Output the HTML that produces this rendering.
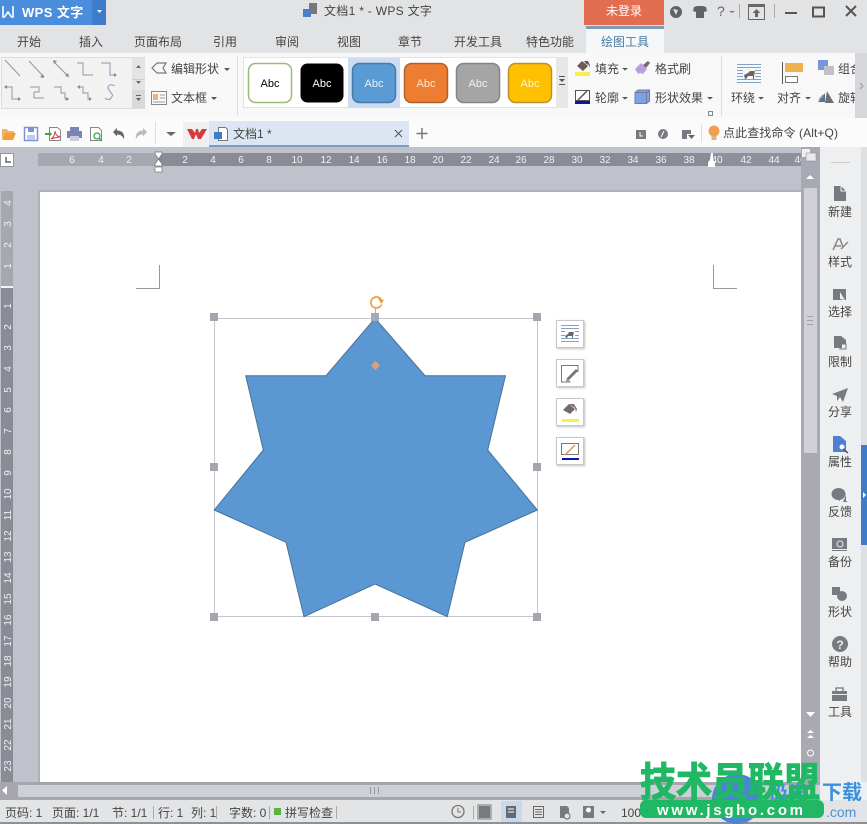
<!DOCTYPE html>
<html><head><meta charset="utf-8"><style>
html,body{margin:0;padding:0;background:#fff;width:867px;height:824px;overflow:hidden}
svg{display:block}
text{font-family:"Liberation Sans","Noto Sans CJK SC",sans-serif;font-size:12px;fill:#444}
.w{fill:#fff}
.r{font-size:10px;fill:#f2f2f4;text-anchor:middle}
.v{font-size:10px;fill:#f2f2f4;text-anchor:middle}
.s{font-size:12px;fill:#444;text-anchor:middle}
.st{font-size:12px;fill:#444}
.ln{fill:none;stroke:#8a98ad;stroke-width:1}
.ic{fill:#777a80}
</style></head><body>
<svg width="867" height="824" viewBox="0 0 867 824" xmlns="http://www.w3.org/2000/svg">
<defs>
<filter id="sh" x="-20%" y="-20%" width="150%" height="150%"><feDropShadow dx="1" dy="1" stdDeviation="1" flood-color="#000" flood-opacity=".25"/></filter>
</defs>
<!-- backgrounds -->
<rect width="867" height="824" fill="#bfc1cb"/>
<rect width="867" height="53" fill="#e2e3e5"/>
<rect y="53" width="867" height="65" fill="#f8f8f8"/>
<rect y="118" width="867" height="29" fill="#fbfbfb"/>
<!-- title bar -->
<rect width="92" height="25" fill="#4a8ddc"/>
<rect x="92" width="14" height="25" fill="#3d7cc9"/>
<path d="M3 6v11h1.500l3.500-5 3.500 5H13V6" fill="none" stroke="#fff" stroke-width="1.600"/>
<text x="22" y="17" class="w" style="font-size:13px;font-weight:bold;letter-spacing:.4px">WPS 文字</text>
<path d="M97 10h5l-2.500 3z" fill="#fff"/>
<rect x="309" y="3" width="8" height="11" fill="#777"/><rect x="303" y="9" width="8" height="8" fill="#4a7fc4"/>
<text x="324" y="15" style="letter-spacing:.3px">文档1 * - WPS 文字</text>
<rect x="584" width="80" height="25" fill="#e26d50"/>
<text x="606" y="15" class="w">未登录</text>
<circle cx="676" cy="12" r="6" fill="#5f6266"/><path d="M673 9l5 1-2 5z" fill="#e2e3e5"/>
<path d="M694 7l3-1h6l3 1 1 4-3 1v6h-8v-6l-3-1z" fill="#5f6266"/>
<text x="717" y="16" style="font-size:14px;fill:#666">?</text><path d="M729 11h6l-3 2z" fill="#777"/>
<rect x="739" y="4" width="1" height="14" fill="#aaa"/>
<rect x="748.500" y="4.500" width="16" height="15" fill="none" stroke="#666"/><rect x="748" y="4" width="17" height="3" fill="#666"/>
<path d="M756.500 9l4 4h-2.500v4h-3v-4h-2.500z" fill="#666"/>
<rect x="774" y="4" width="1" height="14" fill="#aaa"/>
<rect x="785" y="12" width="12" height="2" fill="#555"/>
<rect x="813" y="7.500" width="11" height="9" fill="none" stroke="#555" stroke-width="2"/>
<path d="M846 6l10 10M856 6l-10 10" stroke="#555" stroke-width="2"/>
<!-- tabs -->
<text x="17" y="46">开始</text><text x="79" y="46">插入</text><text x="134" y="46">页面布局</text><text x="213" y="46">引用</text><text x="275" y="46">审阅</text><text x="337" y="46">视图</text><text x="398" y="46">章节</text><text x="454" y="46">开发工具</text><text x="526" y="46">特色功能</text>
<rect x="586" y="26" width="78" height="27" fill="#f5f7f8"/><rect x="586" y="26" width="78" height="3" fill="#7f9cb8"/>
<text x="601" y="46" style="fill:#4a7ca0">绘图工具</text>
<!-- line gallery -->
<rect x="1.500" y="57.500" width="143" height="51" fill="#f4f2f1" stroke="#ddd"/>
<rect x="132" y="58" width="13" height="50" fill="#e4e4e6"/><rect x="132" y="79" width="13" height="1" fill="#ccc"/><rect x="132" y="90" width="13" height="18" fill="#d8d9dc"/>
<path d="M136 68h5l-2.500-3zM136 81h5l-2.500 3z" fill="#666"/><path d="M136 98h5l-2.500 3zM136 95h5v1h-5z" fill="#666"/>
<g class="ln">
<path d="M5 60l15 16M29 61l15 16M55 63l13 13M77 63h6v12h10M101 63h9v12h6M6 87h6v12h8M30 87h9v5h-5v6h10M54 87h7v6h4v6h4M78 87h5v6h5v6h3M115 86c-5-3-9 0-6 4 3 5 5 4 2 8-1 2-4 2-6 0"/>
</g>
<path d="M44 78l-4-1 3-3zM53 60l4 1-3 3zM69 77l-4-1 3-3zM117 75l-3-2v4zM21 99l-3-2v4zM69 99l-3-2v4zM92 99l-3-2v4zM4 87l3-2v4zM77 87l3-2v4z" fill="#7d8ba0"/>
<path d="M152 68l5-5h9l-3 5 3 5h-9z" fill="none" stroke="#777" stroke-width="1.200"/>
<text x="171" y="73">编辑形状</text><path d="M224 68h6l-3 3z" fill="#555"/>
<rect x="151.500" y="91.500" width="15" height="13" fill="#fbfbfb" stroke="#888"/><rect x="153" y="94" width="5" height="6" fill="#eeb27e"/><path d="M160 95h5M160 98h5M153 102h12" stroke="#999"/>
<text x="171" y="102">文本框</text><path d="M211 97h6l-3 3z" fill="#555"/>
<rect x="237" y="56" width="1" height="60" fill="#ddd"/>
<!-- style gallery -->
<rect x="243.500" y="57.500" width="324" height="50" fill="#fff" stroke="#e2e2e2"/>
<rect x="348" y="58" width="52" height="50" fill="#ccdcf1"/>
<rect x="556" y="58" width="12" height="50" fill="#e7e7e8"/>
<path d="M559 79h6l-3 3zM559 76h6v1h-6z" fill="#555"/><path d="M559 84h6v1h-6z" fill="#555"/>
<rect x="248.500" y="63.500" width="43" height="39" rx="7" fill="#fff" stroke="#9bbb7c" stroke-width="1.500"/>
<rect x="300.500" y="63.500" width="43" height="39" rx="7" fill="#000"/>
<rect x="352.500" y="63.500" width="43" height="39" rx="7" fill="#5b9bd5" stroke="#477ba8" stroke-width="1.500"/>
<rect x="404.500" y="63.500" width="43" height="39" rx="7" fill="#ed7d31" stroke="#b0622c" stroke-width="1.500"/>
<rect x="456.500" y="63.500" width="43" height="39" rx="7" fill="#a5a5a5" stroke="#858585" stroke-width="1.500"/>
<rect x="508.500" y="63.500" width="43" height="39" rx="7" fill="#ffc000" stroke="#b9922c" stroke-width="1.500"/>
<g text-anchor="middle">
<text x="270" y="87" style="font-size:11px;fill:#000">Abc</text><text x="322" y="87" class="w" style="font-size:11px">Abc</text><text x="374" y="87" class="w" style="font-size:11px;fill:#e8f0f8">Abc</text><text x="426" y="87" class="w" style="font-size:11px;fill:#fde8d8">Abc</text><text x="478" y="87" class="w" style="font-size:11px;fill:#f0f0f0">Abc</text><text x="530" y="87" class="w" style="font-size:11px;fill:#fff4c8">Abc</text>
</g>
<!-- fill etc -->
<rect x="575" y="72" width="15" height="4" fill="#f7f04a"/>
<path d="M577 66l5-5 6 5-5 5zM584 61h4l2 4v3l-1-3-3-1z" fill="#6f5a5a"/>
<text x="595" y="73">填充</text><path d="M622 68h6l-3 2.500z" fill="#555"/>
<path d="M635 69l6-6 6 6-4 5-3-1-2 1z" fill="#bb9fdc"/><path d="M643 65l5-4 2 2-4 5z" fill="#6a6a72"/>
<text x="655" y="73">格式刷</text>
<rect x="575.500" y="90.500" width="14" height="10" fill="#fff" stroke="#555"/><path d="M578 100l9-9" stroke="#555" stroke-width="1.500"/><rect x="575" y="101" width="15" height="3" fill="#1010b0"/>
<text x="595" y="102">轮廓</text><path d="M622 97h6l-3 2.500z" fill="#555"/>
<path d="M635 92.500l3-2.500h11.500v11l-3 2.500H635z" fill="#7ea0e4" stroke="#6c7f9e"/><path d="M635 92.500h11.500v11M646.500 92.500l3-2.500" fill="none" stroke="#6c7f9e"/>
<text x="655" y="102">形状效果</text><path d="M707 97h6l-3 2.500z" fill="#555"/>
<rect x="708.500" y="111.500" width="4" height="4" fill="none" stroke="#888"/>
<rect x="721" y="56" width="1" height="60" fill="#ddd"/>
<!-- arrange -->
<g stroke="#7ca3c8"><path d="M737 64.500h24M737 82.500h24M737 79.500h24M737 67.500h24M737 70.500h6M755 70.500h6M737 73.500h6M755 73.500h6M737 76.500h6M755 76.500h6"/></g>
<path d="M744 75l4-2 2-2h5l-1 5v3h-1v-3h-5l-2 3h-1z" fill="#666"/>
<text x="731" y="102">环绕</text><path d="M758 97h6l-3 2.500z" fill="#555"/>
<rect x="782" y="62" width="1" height="22" fill="#555"/>
<rect x="785" y="63" width="18" height="9" fill="#f0b050"/><rect x="785.500" y="76.500" width="12" height="6" fill="#fff" stroke="#777"/>
<text x="777" y="102">对齐</text><path d="M805 97h6l-3 2.500z" fill="#555"/>
<rect x="818" y="60" width="10" height="10" fill="#7b94dc"/><rect x="824" y="66" width="10" height="9" fill="#bfc1c6"/>
<text x="838" y="73">组合</text>
<path d="M818 102l7-9v9zM827 91l7 12h-9z" fill="#6a7078"/><path d="M818 100l5-6v4z" fill="#5fa6d8"/>
<text x="838" y="102">旋转</text>
<rect x="855" y="53" width="12" height="65" fill="#d6d7db"/>
<path d="M860 83l3 3-3 3" fill="none" stroke="#999"/>
<!-- toolbar -->
<path d="M2 129h5l1 2h6v2H5l-3 6z" fill="#f1b35c"/><path d="M5 133h11l-3 7H2z" fill="#f39c3e"/>
<rect x="24.500" y="127.500" width="13" height="13" fill="#fff" stroke="#7a93d6" stroke-width="1.500"/><rect x="28" y="128" width="6" height="4" fill="#7a93d6"/><rect x="27" y="135" width="8" height="5" fill="#bccbee"/>
<path d="M49.500 127.500h8l3 3v10h-11z" fill="#fff" stroke="#888"/><path d="M45 133h4v-2l3 3-3 3v-2h-4z" fill="#3aa84c"/><path d="M51 139c3-2 4-5 4-8 0 3 2 5 5 6-3 0-6 1-9 2z" fill="none" stroke="#d8363a"/>
<rect x="70" y="127" width="9" height="4" fill="#7b85b5"/><rect x="67" y="131" width="15" height="7" fill="#7b85b5"/><rect x="70" y="136" width="9" height="5" fill="#ccd"/>
<path d="M90.500 127.500h8l3 3v10h-11z" fill="#fff" stroke="#888"/><circle cx="97" cy="136" r="3" fill="none" stroke="#3aa84c" stroke-width="1.300"/><path d="M99 138l3 3" stroke="#3aa84c" stroke-width="1.300"/>
<path d="M113 132l4-4v2.500c5 0 8 3 7 9-1-3-3-5-7-5v2z" fill="#666"/>
<path d="M147 132l-4-4v2.500c-5 0-8 3-7 9 1-3 3-5 7-5v2z" fill="#bbb"/>
<rect x="155" y="122" width="1" height="22" fill="#ddd"/>
<path d="M166 132h10l-5 4z" fill="#666"/>
<rect x="183" y="122" width="26" height="25" fill="#f0f0f0"/>
<path d="M187 129h5l3 4 1-4h2l1 4 3-4h5l-6 10h-3l-2-5-2 5h-2z" fill="#d8393a"/>
<rect x="209" y="121" width="200" height="26" fill="#dce6f2"/><rect x="209" y="145" width="200" height="2" fill="#7b9cc4"/>
<path d="M218.500 127.500h7l2 2v11h-9z" fill="#fff" stroke="#777"/><rect x="214" y="132" width="8" height="7" fill="#3f7cc6"/>
<text x="233" y="138">文档1 *</text>
<path d="M395 130l7 7M402 130l-7 7" stroke="#555" stroke-width="1"/>
<path d="M422 128v11M416.500 133.500h11" stroke="#777" stroke-width="1.500"/>
<rect x="636" y="130" width="10" height="9" fill="#777a80"/><path d="M640 132v4h3" stroke="#fff" fill="none"/>
<circle cx="663" cy="134" r="5" fill="#777a80"/><path d="M661 137l3-6" stroke="#fff"/>
<path d="M682 130h9v4h-9z" fill="#777a80"/><path d="M682 134h5v5h-5z" fill="#777a80"/><path d="M688 135h7l-3.500 4z" fill="#666"/>
<rect x="701" y="124" width="1" height="18" fill="#ddd"/>
<circle cx="714" cy="131" r="5.500" fill="#f0a050"/><rect x="711.500" y="136" width="5" height="4" fill="#e0b080"/>
<text x="723" y="137" style="letter-spacing:.1px">点此查找命令 (Alt+Q)</text>
<!-- ruler -->
<rect x="38" y="153" width="120" height="13" fill="#a6a7af"/>
<rect x="158" y="153" width="554" height="13" fill="#8a8b94"/>
<rect x="712" y="153" width="89" height="13" fill="#8f9099"/>
<rect x="0.500" y="153.500" width="13" height="13" fill="#fff" stroke="#999"/><path d="M6 157v5h5" stroke="#666" fill="none" stroke-width="1.500"/>
<g>
<text x="72" y="163" class="r">6</text><text x="101" y="163" class="r">4</text><text x="129" y="163" class="r">2</text>
<text x="185" y="163" class="r">2</text><text x="213" y="163" class="r">4</text><text x="241" y="163" class="r">6</text><text x="269" y="163" class="r">8</text><text x="297" y="163" class="r">10</text><text x="326" y="163" class="r">12</text><text x="354" y="163" class="r">14</text><text x="382" y="163" class="r">16</text><text x="410" y="163" class="r">18</text><text x="438" y="163" class="r">20</text><text x="466" y="163" class="r">22</text><text x="494" y="163" class="r">24</text><text x="521" y="163" class="r">26</text><text x="549" y="163" class="r">28</text><text x="577" y="163" class="r">30</text><text x="605" y="163" class="r">32</text><text x="633" y="163" class="r">34</text><text x="661" y="163" class="r">36</text><text x="689" y="163" class="r">38</text><text x="717" y="163" class="r">40</text><text x="746" y="163" class="r">42</text><text x="774" y="163" class="r">44</text><text x="800" y="163" class="r">46</text>
</g>
<path d="M155 152h7v2l-3.500 5-3.500-5z" fill="#fff" stroke="#777" stroke-width=".7"/>
<path d="M155 166h7v-2l-3.500-5-3.500 5z" fill="#fff" stroke="#777" stroke-width=".7"/>
<rect x="155" y="167" width="7" height="5" fill="#fff" stroke="#777" stroke-width=".7"/>
<path d="M711 153h2v7l2 2v5h-7v-5l2-2z" fill="#fff"/>
<rect x="801" y="147" width="19" height="41" fill="#a8a9b2"/>
<rect x="802" y="149" width="8" height="8" fill="#f0f0f4"/><rect x="806" y="153" width="10" height="8" fill="#e8e8ee" stroke="#888" stroke-width=".5"/>
<path d="M806 179l4-4 4 4z" fill="#fff"/>
<!-- vertical ruler -->
<rect x="1" y="191" width="12" height="95" fill="#a6a7af"/>
<rect x="1" y="286" width="12" height="2" fill="#f4f4f6"/>
<rect x="1" y="288" width="12" height="494" fill="#8a8b94"/>
<g id="vr">
<text transform="translate(11 203) rotate(-90)" class="v">4</text><text transform="translate(11 224) rotate(-90)" class="v">3</text><text transform="translate(11 245) rotate(-90)" class="v">2</text><text transform="translate(11 266) rotate(-90)" class="v">1</text>
<text transform="translate(11 306) rotate(-90)" class="v">1</text><text transform="translate(11 327) rotate(-90)" class="v">2</text><text transform="translate(11 348) rotate(-90)" class="v">3</text><text transform="translate(11 369) rotate(-90)" class="v">4</text><text transform="translate(11 390) rotate(-90)" class="v">5</text><text transform="translate(11 410) rotate(-90)" class="v">6</text><text transform="translate(11 431) rotate(-90)" class="v">7</text><text transform="translate(11 452) rotate(-90)" class="v">8</text><text transform="translate(11 473) rotate(-90)" class="v">9</text><text transform="translate(11 494) rotate(-90)" class="v">10</text><text transform="translate(11 515) rotate(-90)" class="v">11</text><text transform="translate(11 536) rotate(-90)" class="v">12</text><text transform="translate(11 557) rotate(-90)" class="v">13</text><text transform="translate(11 578) rotate(-90)" class="v">14</text><text transform="translate(11 599) rotate(-90)" class="v">15</text><text transform="translate(11 620) rotate(-90)" class="v">16</text><text transform="translate(11 641) rotate(-90)" class="v">17</text><text transform="translate(11 661) rotate(-90)" class="v">18</text><text transform="translate(11 682) rotate(-90)" class="v">19</text><text transform="translate(11 703) rotate(-90)" class="v">20</text><text transform="translate(11 724) rotate(-90)" class="v">21</text><text transform="translate(11 745) rotate(-90)" class="v">22</text><text transform="translate(11 766) rotate(-90)" class="v">23</text>
</g>
<!-- page -->
<rect x="38" y="190" width="764" height="2" fill="#aeb0ba"/><rect x="38" y="190" width="2" height="592" fill="#aeb0ba"/>
<rect x="40" y="192" width="762" height="590" fill="#fff"/>
<path d="M159.500 265v23.500H136M713.500 265v23.500H737" fill="none" stroke="#999"/>
<!-- selection & star -->
<rect x="214.500" y="318.500" width="323" height="298" fill="none" stroke="#c4c5ca"/>
<path d="M375 318.300L425 375.700H505.500L487.700 450L537.300 510L465 542.300L447.300 616.700L375 584L304 616.700L286 542.300L214.300 510L263.300 450L245.700 375.700H326Z" fill="#5b97d3" stroke="#4a7296" stroke-width="1"/>
<path d="M375.500 307v8" stroke="#e8a23a"/>
<path d="M381 299.500a5.500 5.500 0 1 0 .5 5" fill="none" stroke="#e8a23a" stroke-width="1.700"/><path d="M378 298l6 2-3 4z" fill="#e8a23a"/>
<g fill="#a5a5ae">
<rect x="210" y="313" width="8" height="8"/><rect x="371" y="313" width="8" height="8" fill="#a6a9b6"/><rect x="533" y="313" width="8" height="8"/><rect x="210" y="463" width="8" height="8"/><rect x="533" y="463" width="8" height="8"/><rect x="210" y="613" width="8" height="8"/><rect x="371" y="613" width="8" height="8"/><rect x="533" y="613" width="8" height="8"/>
</g>
<path d="M375.500 361l4.500 4.500-4.500 4.500-4.500-4.500z" fill="#dba084"/>
<!-- float buttons -->
<g fill="#fff" stroke="#c8c8cc" filter="url(#sh)">
<rect x="556.500" y="320.500" width="27" height="27"/><rect x="556.500" y="359.500" width="27" height="27"/><rect x="556.500" y="398.500" width="27" height="27"/><rect x="556.500" y="437.500" width="27" height="27"/>
</g>
<g stroke="#7ca3c8"><path d="M561 325.500h18M561 341.500h18M561 338.500h18M561 328.500h18M561 331.500h4M575 331.500h4M561 335.500h4M575 335.500h4"/></g>
<path d="M565 336l3-2 1-2h5l-1 4v2h-1v-2h-4l-1 2h-1z" fill="#666"/>
<path d="M578 372v-6.500h-16.500v16.500h9" fill="none" stroke="#777"/><path d="M566 381l3-1 9-9-2-2-9 9z" fill="#777"/><path d="M565 382l3-3 2 2-2 1z" fill="#8a9cd0"/>
<path d="M563 410l6-6 6 5-5 5z" fill="#706a6c"/><path d="M569 404h5l3 5-1 3-1-4z" fill="#8a6a6a"/><rect x="562" y="419" width="17" height="3" fill="#f7f04a"/>
<rect x="561.500" y="443.500" width="17" height="11" fill="#fff" stroke="#777"/><path d="M565 455l10-10" stroke="#d99a5a" stroke-width="1.500"/><rect x="562" y="458" width="17" height="2" fill="#1010b0"/>
<!-- scrollbar right -->
<rect x="801" y="188" width="19" height="594" fill="#a8a9b2"/>
<rect x="804" y="188" width="13" height="265" fill="#d0d1d7"/>
<path d="M807 316.500h6M807 320.500h6M807 324.500h6" stroke="#a0a1a8"/>
<path d="M806 712h9l-4.500 5z" fill="#fff"/>
<path d="M807 733l3.500-3 3.500 3zM807 738l3.500-3 3.500 3z" fill="#fff"/>
<circle cx="810.500" cy="753" r="3" fill="none" stroke="#fff"/>
<path d="M807 767l3.500 3 3.500-3zM807 772l3.500 3 3.500-3z" fill="#fff"/>
<!-- sidebar -->
<rect x="820" y="147" width="41" height="653" fill="#eeeff1"/>
<rect x="861" y="147" width="6" height="653" fill="#dfe0e2"/>
<rect x="861" y="445" width="6" height="100" fill="#3f7cc8"/><path d="M863 492l3 3-3 3z" fill="#fff"/>
<rect x="831" y="162" width="19" height="1" fill="#ccc"/>
<path d="M834 186h7l5 5v10h-12z" class="ic"/><path d="M841 186v5h5" fill="none" stroke="#eeeff1"/>
<text x="840" y="216" class="s">新建</text>
<path d="M833 250l5-11h2l3 8M835 246h6M841 249l7-7" fill="none" stroke="#888" stroke-width="1.500"/>
<text x="840" y="266" class="s">样式</text>
<rect x="833" y="289" width="13" height="11" class="ic"/><path d="M840 292l5 8-5-1z" fill="#eeeff1"/>
<text x="840" y="316" class="s">选择</text>
<path d="M834 336h7l5 4v4h-4v4h-8z" class="ic"/><rect x="840" y="344" width="6" height="5" fill="none" stroke="#777"/>
<text x="840" y="366" class="s">限制</text>
<path d="M832 394l16-6-5 14-3-5-3 4v-5z" class="ic"/>
<text x="840" y="416" class="s">分享</text>
<path d="M833 436h7l6 5v11h-13z" fill="#4f80d6"/><circle cx="842" cy="447" r="2.500" fill="#fff"/><path d="M843 449l5 4" stroke="#557" stroke-width="1.500"/>
<text x="840" y="466" class="s">属性</text>
<ellipse cx="838.500" cy="494" rx="7" ry="6" class="ic"/><path d="M835 498h5v3zM846 495v6l2 1h-5z" fill="#777a80"/>
<text x="840" y="516" class="s">反馈</text>
<rect x="832" y="538" width="15" height="11" class="ic"/><rect x="832" y="550" width="15" height="1" class="ic"/><circle cx="840" cy="544" r="3" fill="none" stroke="#eeeff1"/>
<text x="840" y="566" class="s">备份</text>
<rect x="832" y="587" width="8" height="8" class="ic"/><circle cx="842" cy="596" r="5" class="ic"/>
<text x="840" y="616" class="s">形状</text>
<circle cx="840" cy="644" r="8" class="ic"/><text x="840" y="649" text-anchor="middle" style="font-size:12px;font-weight:bold;fill:#eeeff1">?</text>
<text x="840" y="666" class="s">帮助</text>
<rect x="832" y="691" width="15" height="10" class="ic"/><path d="M836 691v-3h7v3" fill="none" stroke="#777" stroke-width="1.300"/><rect x="832" y="694" width="15" height="1" fill="#eeeff1"/>
<text x="840" y="716" class="s">工具</text>
<!-- h-scrollbar -->
<rect y="782" width="820" height="3" fill="#a5a6ae"/>
<rect y="785" width="820" height="12" fill="#cfd0d6"/>
<rect y="797" width="820" height="3" fill="#a5a6ae"/>
<rect y="782" width="18" height="18" fill="#a5a6ae"/>
<path d="M7 786v9l-5-4.500z" fill="#fff"/>
<path d="M370.500 787v7M374.500 787v7M378.500 787v7" stroke="#9a9ba2"/>
<rect x="820" y="782" width="47" height="18" fill="#eeeff1"/>
<!-- status -->
<rect y="800" width="867" height="24" fill="#e3e4e6"/>
<rect y="822" width="867" height="2" fill="#8f9096"/>
<text x="5" y="817" class="st">页码: 1</text><text x="52" y="817" class="st">页面: 1/1</text><text x="112" y="817" class="st">节: 1/1</text><text x="158" y="817" class="st">行: 1</text><text x="191" y="817" class="st">列: 1</text><text x="229" y="817" class="st">字数: 0</text><text x="285" y="817" class="st">拼写检查</text>
<g fill="#aaa"><rect x="153" y="806" width="1" height="13"/><rect x="216" y="806" width="1" height="13"/><rect x="269" y="806" width="1" height="13"/><rect x="336" y="806" width="1" height="13"/><rect x="473" y="806" width="1" height="13"/></g>
<rect x="274" y="808" width="7" height="7" fill="#5fb040"/>
<circle cx="458" cy="811.500" r="6" fill="none" stroke="#777" stroke-width="1.300"/><path d="M458 808v4h3" fill="none" stroke="#777"/>
<rect x="479" y="806" width="11" height="12" fill="#777a80"/><path d="M478 805h13v14h-13z" fill="none" stroke="#777"/>
<rect x="501" y="801" width="21" height="21" fill="#c8d9ee"/>
<rect x="506" y="806" width="10" height="12" fill="#666a70"/><path d="M508 809h6M508 812h6" stroke="#fff"/>
<rect x="533.500" y="806.500" width="10" height="11" fill="none" stroke="#666"/><path d="M535 809.500h7M535 812h7M535 814.500h7" stroke="#666"/>
<path d="M560 806h7l2 2v10h-9z" class="ic"/><circle cx="567" cy="816" r="3" fill="#e3e4e6" stroke="#666"/>
<rect x="583" y="806" width="11" height="12" class="ic"/><circle cx="588.500" cy="810" r="2.500" fill="#fff"/>
<path d="M600 811h6l-3 3z" fill="#666"/>
<text x="621" y="817" class="st">100</text>
<!-- watermark -->
<circle cx="737" cy="799" r="25" fill="#4a86d0"/>
<text x="768" y="800" style="font-size:20px;font-weight:bold;fill:#3a90e0">极光</text>
<text x="822" y="799" style="font-size:20px;font-weight:bold;fill:#3a90e0">下载</text>
<text x="826" y="817" style="font-size:14px;fill:#4a90d8">.com</text>
<text transform="translate(640 796) scale(1 1.100)" style="font-size:36px;font-weight:bold;fill:#20b864;stroke:#20b864;stroke-width:1">技术员联盟</text>
<rect x="640" y="800" width="184" height="18" rx="6" fill="#20b864"/>
<text x="657" y="815" class="w" style="font-size:15px;font-weight:bold;letter-spacing:2.700px">www.jsgho.com</text>
</svg>
</body></html>
